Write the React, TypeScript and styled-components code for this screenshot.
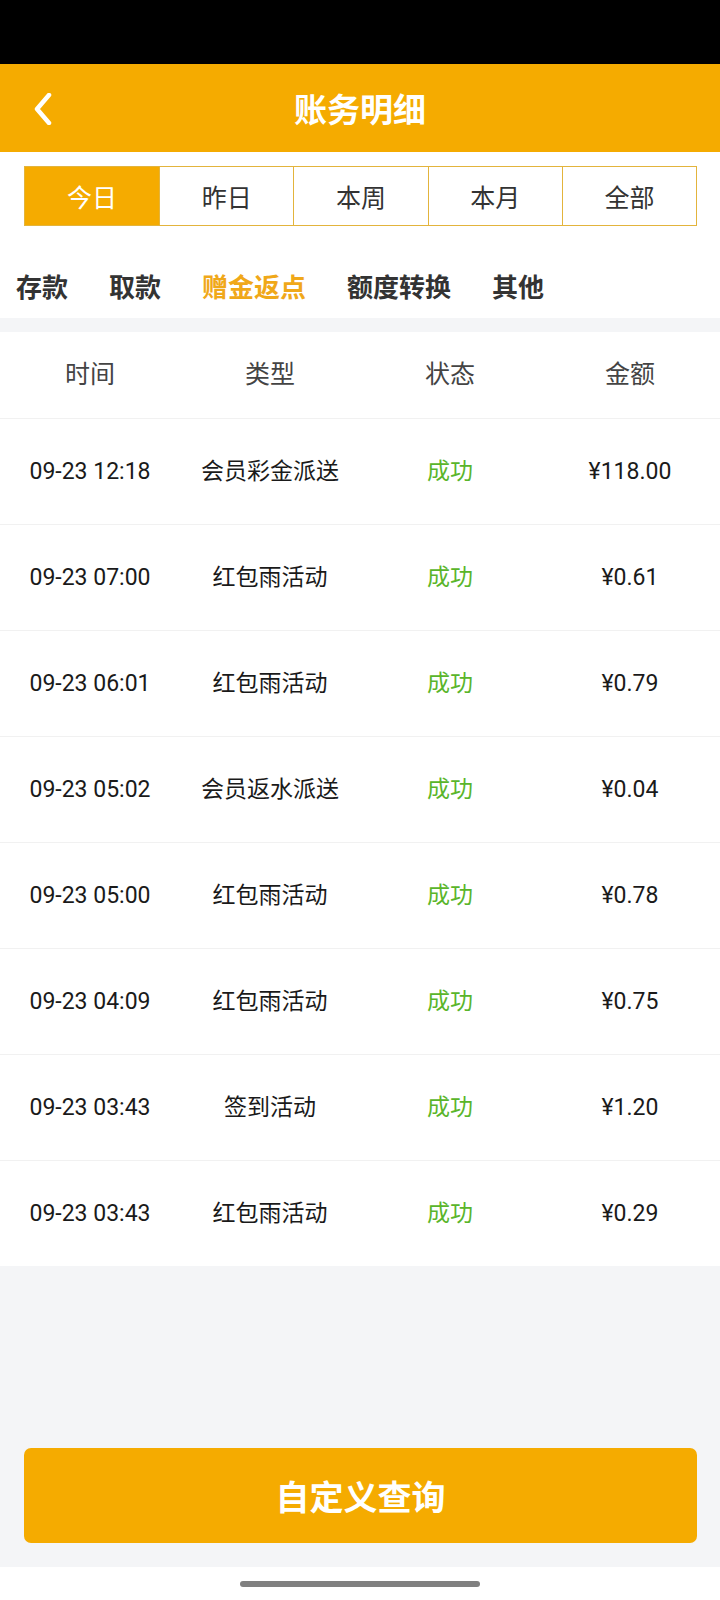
import React, { useState } from 'react';
import styled, { createGlobalStyle } from 'styled-components';

const GlobalStyle = createGlobalStyle`
  body {
    margin: 0;
    background: #fff;
    font-family: Roboto, "Noto Sans CJK SC", sans-serif;
  }
`;

const Page = styled.div`
  width: 720px;
  height: 1600px;
  display: flex;
  flex-direction: column;
  background: #fff;
`;

const StatusBar = styled.div`
  height: 64px;
  background: #000;
`;

const Header = styled.header`
  height: 88px;
  background: #f5ab00;
  display: grid;
  grid-template-columns: 88px 1fr 88px;
  align-items: center;
`;

const BackButton = styled.button`
  background: none;
  border: none;
  padding: 2px 0 0 33px;
  height: 88px;
  display: flex;
  align-items: center;
  cursor: pointer;
`;

const Title = styled.h1`
  margin: 0;
  text-align: center;
  color: #fff;
  font-size: 33px;
  font-weight: 700;
  font-family: "Noto Sans CJK SC", sans-serif;
`;

const RangeWrap = styled.div`
  padding: 14px 23px 0 24px;
`;

const RangeTabs = styled.div`
  display: grid;
  grid-template-columns: repeat(5, 1fr);
  height: 60px;
  border: 1.5px solid #e3b43c;
  box-sizing: border-box;
`;

const RangeTab = styled.div<{ $active?: boolean }>`
  display: flex;
  align-items: center;
  justify-content: center;
  font-size: 25px;
  font-family: "Noto Sans CJK SC", sans-serif;
  color: ${(p) => (p.$active ? '#fff' : '#333')};
  background: ${(p) => (p.$active ? '#f5ab00' : '#fff')};
  & + & {
    border-left: 1.5px solid #e3b43c;
  }
`;

const CategoryBar = styled.nav`
  height: 92px;
  box-sizing: border-box;
  padding: 42px 16px 14px;
  display: flex;
  gap: 41px;
`;

const Category = styled.div<{ $active?: boolean }>`
  font-size: 26px;
  line-height: 36px;
  font-weight: 700;
  font-family: "Noto Sans CJK SC", sans-serif;
  color: ${(p) => (p.$active ? '#f0a819' : '#333')};
`;

const Gap = styled.div`
  height: 14px;
  background: #f4f5f7;
`;

const Row = styled.div<{ $head?: boolean }>`
  display: grid;
  grid-template-columns: repeat(4, 1fr);
  align-items: center;
  height: ${(p) => (p.$head ? '86px' : '106px')};
  box-sizing: border-box;
  border-top: ${(p) => (p.$head ? 'none' : '1px solid #f1f1f1')};
  background: #fff;
`;

const Cell = styled.div<{ $head?: boolean; $ok?: boolean }>`
  text-align: center;
  font-size: ${(p) => (p.$head ? '25px' : '23px')};
  line-height: 32px;
  color: ${(p) => (p.$ok ? '#5ab52a' : p.$head ? '#444' : '#1a1a1a')};
  font-family: Roboto, "Noto Sans CJK SC", sans-serif;
`;

const Footer = styled.div`
  flex: 1;
  background: #f4f5f7;
  display: flex;
  flex-direction: column;
  justify-content: flex-end;
  padding: 0 23px 24px 24px;
`;

const QueryButton = styled.button`
  height: 95px;
  border: none;
  border-radius: 7px;
  background: #f5ab00;
  color: #fff;
  font-size: 34px;
  font-weight: 700;
  font-family: "Noto Sans CJK SC", sans-serif;
  cursor: pointer;
`;

const HomeBar = styled.div`
  height: 33px;
  display: flex;
  justify-content: center;
  align-items: center;
`;

const Indicator = styled.div`
  width: 240px;
  height: 6px;
  border-radius: 3px;
  background: #808080;
`;

const ranges = ['今日', '昨日', '本周', '本月', '全部'];
const categories = ['存款', '取款', '赠金返点', '额度转换', '其他'];

const records = [
  { time: '09-23 12:18', type: '会员彩金派送', amount: '¥118.00' },
  { time: '09-23 07:00', type: '红包雨活动', amount: '¥0.61' },
  { time: '09-23 06:01', type: '红包雨活动', amount: '¥0.79' },
  { time: '09-23 05:02', type: '会员返水派送', amount: '¥0.04' },
  { time: '09-23 05:00', type: '红包雨活动', amount: '¥0.78' },
  { time: '09-23 04:09', type: '红包雨活动', amount: '¥0.75' },
  { time: '09-23 03:43', type: '签到活动', amount: '¥1.20' },
  { time: '09-23 03:43', type: '红包雨活动', amount: '¥0.29' },
];

const App = () => {
  const [range, setRange] = useState(0);
  const [category, setCategory] = useState(2);

  return (
    <Page>
      <GlobalStyle />
      <StatusBar />
      <Header>
        <BackButton aria-label="back">
          <svg width="20" height="32" viewBox="0 0 20 32">
            <path d="M16 2 L4 16 L16 30" fill="none" stroke="#fff" strokeWidth="4.5" strokeLinecap="round" strokeLinejoin="round" />
          </svg>
        </BackButton>
        <Title>账务明细</Title>
        <div />
      </Header>
      <RangeWrap>
        <RangeTabs>
          {ranges.map((r, i) => (
            <RangeTab key={r} $active={i === range} onClick={() => setRange(i)}>
              {r}
            </RangeTab>
          ))}
        </RangeTabs>
      </RangeWrap>
      <CategoryBar>
        {categories.map((c, i) => (
          <Category key={c} $active={i === category} onClick={() => setCategory(i)}>
            {c}
          </Category>
        ))}
      </CategoryBar>
      <Gap />
      <Row $head>
        <Cell $head>时间</Cell>
        <Cell $head>类型</Cell>
        <Cell $head>状态</Cell>
        <Cell $head>金额</Cell>
      </Row>
      {records.map((r, i) => (
        <Row key={i}>
          <Cell>{r.time}</Cell>
          <Cell>{r.type}</Cell>
          <Cell $ok>成功</Cell>
          <Cell>{r.amount}</Cell>
        </Row>
      ))}
      <Footer>
        <QueryButton>自定义查询</QueryButton>
      </Footer>
      <HomeBar>
        <Indicator />
      </HomeBar>
    </Page>
  );
};

export default App;
